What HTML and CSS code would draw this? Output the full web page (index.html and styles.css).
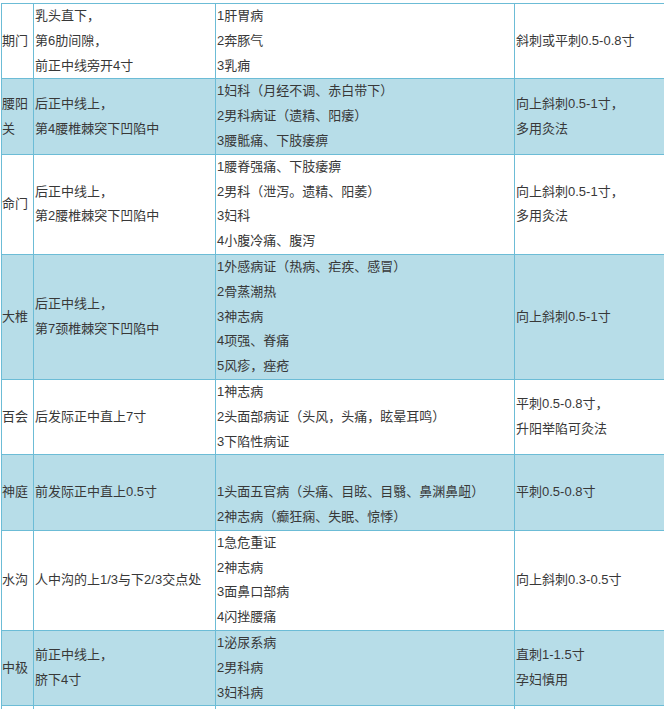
FILE: index.html
```html
<!DOCTYPE html>
<html lang="zh">
<head>
<meta charset="utf-8">
<title>穴位表</title>
<link rel="stylesheet" href="styles.css">
</head>
<body>
<table class="acu">
  <colgroup>
    <col class="c-name">
    <col class="c-loc">
    <col class="c-ind">
    <col class="c-meth">
  </colgroup>
  <tbody>
    <tr class="white">
      <td class="name">期门</td>
      <td class="loc">乳头直下，<br>第6肋间隙，<br>前正中线旁开4寸</td>
      <td class="ind">1肝胃病<br>2奔豚气<br>3乳痈</td>
      <td class="meth">斜刺或平刺0.5-0.8寸</td>
    </tr>
    <tr class="blue">
      <td class="name">腰阳关</td>
      <td class="loc">后正中线上，<br>第4腰椎棘突下凹陷中</td>
      <td class="ind">1妇科（月经不调、赤白带下）<br>2男科病证（遗精、阳痿）<br>3腰骶痛、下肢痿痹</td>
      <td class="meth">向上斜刺0.5-1寸，<br>多用灸法</td>
    </tr>
    <tr class="white">
      <td class="name">命门</td>
      <td class="loc">后正中线上，<br>第2腰椎棘突下凹陷中</td>
      <td class="ind">1腰脊强痛、下肢痿痹<br>2男科（泄泻。遗精、阳萎）<br>3妇科<br>4小腹冷痛、腹泻</td>
      <td class="meth">向上斜刺0.5-1寸，<br>多用灸法</td>
    </tr>
    <tr class="blue">
      <td class="name">大椎</td>
      <td class="loc">后正中线上，<br>第7颈椎棘突下凹陷中</td>
      <td class="ind">1外感病证（热病、疟疾、感冒）<br>2骨蒸潮热<br>3神志病<br>4项强、脊痛<br>5风疹，痤疮</td>
      <td class="meth">向上斜刺0.5-1寸</td>
    </tr>
    <tr class="white">
      <td class="name">百会</td>
      <td class="loc">后发际正中直上7寸</td>
      <td class="ind">1神志病<br>2头面部病证（头风，头痛，眩晕耳鸣）<br>3下陷性病证</td>
      <td class="meth">平刺0.5-0.8寸，<br>升阳举陷可灸法</td>
    </tr>
    <tr class="blue">
      <td class="name">神庭</td>
      <td class="loc">前发际正中直上0.5寸</td>
      <td class="ind"><br>1头面五官病（头痛、目眩、目翳、鼻渊鼻衄）<br>2神志病（癫狂痫、失眠、惊悸）</td>
      <td class="meth">平刺0.5-0.8寸</td>
    </tr>
    <tr class="white">
      <td class="name">水沟</td>
      <td class="loc">人中沟的上1/3与下2/3交点处</td>
      <td class="ind">1急危重证<br>2神志病<br>3面鼻口部病<br>4闪挫腰痛</td>
      <td class="meth">向上斜刺0.3-0.5寸</td>
    </tr>
    <tr class="blue">
      <td class="name">中极</td>
      <td class="loc">前正中线上，<br>脐下4寸</td>
      <td class="ind">1泌尿系病<br>2男科病<br>3妇科病</td>
      <td class="meth">直刺1-1.5寸<br>孕妇慎用</td>
    </tr>
    <tr class="white">
      <td class="name">&nbsp;</td>
      <td class="loc">&nbsp;</td>
      <td class="ind">&nbsp;</td>
      <td class="meth">&nbsp;</td>
    </tr>
  </tbody>
</table>
</body>
</html>
```
FILE: styles.css
```css
html, body {
  margin: 0;
  padding: 0;
  overflow: hidden;
  background: #ffffff;
}

body {
  width: 664px;
  height: 709px;
}

.acu {
  border-collapse: collapse;
  table-layout: fixed;
  width: 663px;
  margin: 3px 0 0 1px;
  font-family: "Liberation Sans", "Noto Sans CJK SC", sans-serif;
  font-size: 13px;
  line-height: 24.8px;
  color: #383838;
}

.c-name { width: 32px; }
.c-loc { width: 182px; }
.c-ind { width: 299px; }
.c-meth { width: 150px; }

.acu td {
  border: 1px solid #6cbcd6;
  padding: 0 0 0 1px;
  vertical-align: middle;
  white-space: nowrap;
  overflow: hidden;
}

.acu td.meth {
  border-right: none;
}

.acu td.name {
  white-space: normal;
  padding-left: 0;
}

.acu tr.blue td {
  background: #b7dde8;
}

.acu tr.white td {
  background: #ffffff;
}
```
